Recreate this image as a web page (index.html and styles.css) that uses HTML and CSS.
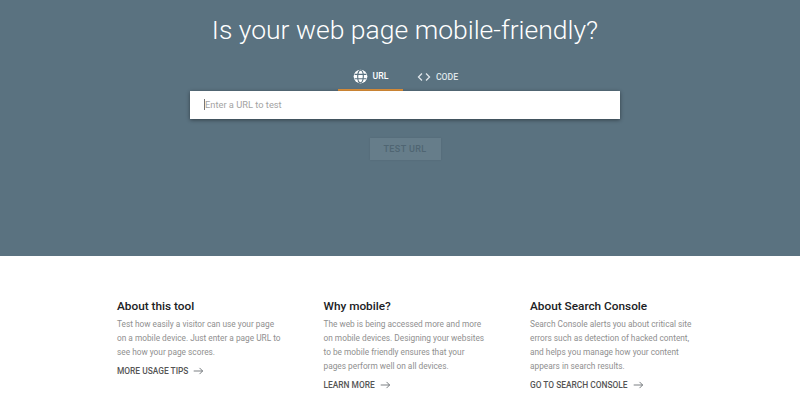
FILE: index.html
```html
<!DOCTYPE html>
<html lang="en">
<head>
<meta charset="utf-8">
<title>Mobile-Friendly Test</title>
<link rel="stylesheet" href="styles.css">
</head>
<body>
<section class="hero">
  <h1 class="title">Is your web page mobile-friendly?</h1>
  <div class="tabs">
    <div class="tab tab-active">
      <svg class="icon-globe" viewBox="0 0 24 24" width="15" height="15"><circle cx="12" cy="12" r="11" fill="#fff"/><g fill="none" stroke="#5a7280" stroke-width="1.8"><ellipse cx="12" cy="12" rx="4.5" ry="10"/><path d="M2.5 8.5h19M2.5 15.5h19"/></g></svg>
      <span>URL</span>
    </div>
    <div class="tab tab-code">
      <svg class="icon-code" viewBox="0 0 24 24" width="14" height="14"><path d="M8.5 6L2.5 12l6 6M15.500 6l6 6-6 6" fill="none" stroke="#dfe6ea" stroke-width="2.2"/></svg>
      <span>CODE</span>
    </div>
  </div>
  <div class="url-box">
    <span class="caret"></span><span class="placeholder">Enter a URL to test</span>
  </div>
  <div class="test-btn">TEST URL</div>
</section>
<section class="info">
  <article class="col">
    <h2>About this tool</h2>
    <p>Test how easily a visitor can use your page<br>on a mobile device. Just enter a page URL to<br>see how your page scores.</p>
    <a class="more">MORE USAGE TIPS <svg viewBox="0 0 16 12" width="11" height="10"><path d="M1 6h13M9.500 1.500L14 6l-4.500 4.500" fill="none" stroke="#5f6368" stroke-width="1.200"/></svg></a>
  </article>
  <article class="col">
    <h2>Why mobile?</h2>
    <p>The web is being accessed more and more<br>on mobile devices. Designing your websites<br>to be mobile friendly ensures that your<br>pages perform well on all devices.</p>
    <a class="more">LEARN MORE <svg viewBox="0 0 16 12" width="11" height="10"><path d="M1 6h13M9.500 1.500L14 6l-4.500 4.500" fill="none" stroke="#5f6368" stroke-width="1.200"/></svg></a>
  </article>
  <article class="col">
    <h2>About Search Console</h2>
    <p>Search Console alerts you about critical site<br>errors such as detection of hacked content,<br>and helps you manage how your content<br>appears in search results.</p>
    <a class="more">GO TO SEARCH CONSOLE <svg viewBox="0 0 16 12" width="11" height="10"><path d="M1 6h13M9.500 1.500L14 6l-4.500 4.500" fill="none" stroke="#5f6368" stroke-width="1.200"/></svg></a>
  </article>
</section>
</body>
</html>
```
FILE: styles.css
```css
html, body { margin: 0; padding: 0; }
body { width: 800px; height: 407px; overflow: hidden; background: #fff; font-family: Roboto, "Liberation Sans", sans-serif; }
.hero { height: 256px; box-sizing: border-box; background: #5a7280; display: flex; flex-direction: column; align-items: center; padding: 13px 0 0 10px; }
.title { margin: 0; font-size: 26.500px; line-height: 34px; font-weight: 300; color: #fff; }
.tabs { display: flex; margin-top: 16px; height: 28px; width: 430px; padding-left: 148px; box-sizing: border-box; }
.tab { display: flex; align-items: center; gap: 5px; width: 65px; height: 28px; box-sizing: border-box; justify-content: center; font-size: 8.700px; font-weight: 500; color: #dfe6ea; flex: none; }
.tab-code { margin-left: 2px; }
.tab-active { color: #fff; border-bottom: 2px solid #e0923a; }
.url-box { width: 430px; height: 28px; box-sizing: border-box; background: #fff; box-shadow: 0 1px 4px rgba(0,0,0,.45); display: flex; align-items: center; padding: 0 0 1px 14px; }
.caret { width: 1px; height: 11px; background: #777; }
.placeholder { font-size: 9.300px; color: #a3a3a3; }
.test-btn { margin-top: 19px; width: 71px; height: 22px; background: #667d8a; color: #4f6572; font-size: 9px; font-weight: 500; letter-spacing: .4px; display: flex; align-items: center; justify-content: center; box-shadow: 0 0 2px rgba(0,0,0,.1); }
.info { display: flex; padding: 42px 0 0 117px; }
.col { flex: none; width: 206.500px; }
h2 { margin: 0; font-size: 11.800px; line-height: 16px; font-weight: 500; color: #202124; }
p { margin: 3px 0 0; font-size: 8.300px; line-height: 14px; color: #8f8f8f; }
.more { display: flex; align-items: center; gap: 5px; margin-top: 5px; font-size: 8.400px; line-height: 14px; font-weight: 500; color: #555; }
```
